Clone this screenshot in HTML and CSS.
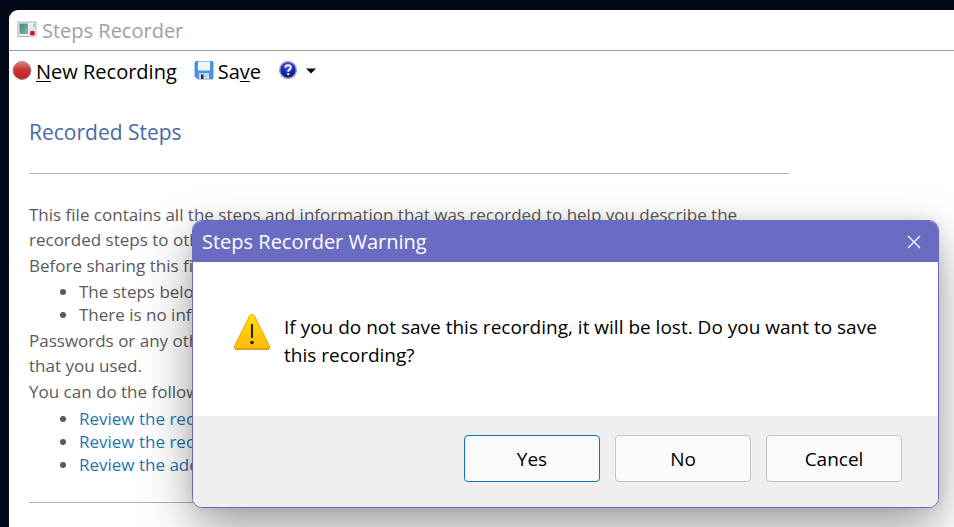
FILE: index.html
```html
<!DOCTYPE html>
<html lang="en">
<head>
<meta charset="utf-8">
<title>Steps Recorder</title>
<link rel="stylesheet" href="styles.css">
</head>
<body>
<main class="window">
  <header class="titlebar">
    <svg class="app-icon" width="21" height="18" viewBox="0 0 21 18" aria-hidden="true">
      <defs><linearGradient id="screen" x2="1" y2="1"><stop stop-color="#3f8587"/><stop offset="1" stop-color="#7fc09a"/></linearGradient></defs>
      <rect x="1" y="1" width="18" height="14.5" fill="#f4f7f8" stroke="#a3afb5"/>
      <rect x="2.500" y="2.500" width="8.500" height="10.500" fill="url(#screen)"/>
      <path d="M12.500 4.500h4M12.500 7.500h3" stroke="#d3dde0"/>
      <path d="M17 2.500v4" stroke="#5da59d"/>
      <circle cx="15.500" cy="12.200" r="4.300" fill="#ece9ea" stroke="#cfcccd" stroke-width=".6"/>
      <rect x="13.200" y="9.900" width="4.500" height="4.500" rx="1.200" fill="#cc1425"/>
    </svg>
    <span class="window-title">Steps Recorder</span>
  </header>
  <nav class="toolbar">
    <button class="tool" type="button">
      <svg width="20" height="20" viewBox="0 0 20 20" aria-hidden="true">
        <defs><linearGradient id="rec" x2="0" y2="1"><stop stop-color="#de8580"/><stop offset=".45" stop-color="#cc3430"/><stop offset="1" stop-color="#c2221f"/></linearGradient></defs>
        <circle cx="10" cy="9.500" r="9" fill="url(#rec)" stroke="#9b8f8d" stroke-width="1"/>
      </svg>
      <span><u>N</u>ew Recording</span>
    </button>
    <button class="tool" type="button">
      <svg width="20" height="20" viewBox="0 0 20 20" aria-hidden="true">
        <path d="M2.500 .5H18q1 0 1 1v15.500q0 1-1 1H4L1 15.500V2Q1 .5 2.500 .5z" fill="#4a95e6" stroke="#3a80d0" stroke-width=".8"/>
        <path d="M4 .5h12v9H4z" fill="#eef5fb"/>
        <path d="M5 12h10v6H5z" fill="#cbd6df"/>
        <path d="M7 13.500h2.500V18H7z" fill="#26323e"/>
      </svg>
      <span>Sa<u>v</u>e</span>
    </button>
    <button class="tool help" type="button" aria-label="Help">
      <svg width="20" height="20" viewBox="0 0 20 20" aria-hidden="true">
        <defs><radialGradient id="help" cx=".5" cy=".3" r=".7"><stop stop-color="#3c59dd"/><stop offset=".6" stop-color="#1724b5"/><stop offset="1" stop-color="#070c78"/></radialGradient></defs>
        <circle cx="10" cy="9" r="8.300" fill="url(#help)" stroke="#9b9da5" stroke-width="1.500"/>
        <path d="M7.300 6.700Q7.400 4.300 10.100 4.300 12.800 4.300 12.800 6.500 12.800 7.800 11.300 8.700 10.200 9.400 10.200 10.700" fill="none" stroke="#fff" stroke-width="2"/>
        <circle cx="10.200" cy="13.100" r="1.200" fill="#fff"/>
      </svg>
      <svg width="10" height="6" viewBox="0 0 10 6" aria-hidden="true"><path d="M0 .5h10L5 5.500z"/></svg>
    </button>
  </nav>
  <article class="report">
    <h1>Recorded Steps</h1>
    <hr>
    <p>This file contains all the steps and information that was recorded to help you describe the recorded steps to others.</p>
    <p>Before sharing this file, you should verify the following:</p>
    <ul>
      <li>The steps below accurately describe the recording.</li>
      <li>There is no information below that you do not want others to see.</li>
    </ul>
    <p>Passwords or any other text you typed were not recorded, except for function keys<br>that you used.</p>
    <p>You can do the following:</p>
    <ul class="links">
      <li><a href="#steps">Review the recorded steps</a></li>
      <li><a href="#screens">Review the recorded screenshots</a></li>
      <li><a href="#details">Review the additional details</a></li>
    </ul>
    <hr class="end">
  </article>
</main>
<section class="dialog" role="alertdialog" aria-labelledby="dialog-title" aria-describedby="dialog-text">
  <header class="dialog-bar">
    <h2 id="dialog-title">Steps Recorder Warning</h2>
    <button class="close" type="button" aria-label="Close">
      <svg width="14" height="14" viewBox="0 0 14 14" aria-hidden="true"><path d="M1 1l12 12M13 1L1 13" stroke="#fff" stroke-width="1.200"/></svg>
    </button>
  </header>
  <div class="dialog-body">
    <svg class="warning" width="38" height="38" viewBox="0 0 38 38" aria-hidden="true">
      <defs><linearGradient id="warn" x2="0" y2="1"><stop stop-color="#ffe000"/><stop offset="1" stop-color="#fdb90b"/></linearGradient></defs>
      <path d="M16.500 3Q19 -.5 21.500 3L36.500 33Q37.500 36.500 34.500 36.500H3.500Q.5 36.500 1.500 33z" fill="url(#warn)" stroke="#e2a51b" stroke-width="1"/>
      <path d="M2.500 36H35.500" stroke="#d99a1c" stroke-width="1.500"/>
      <path d="M19 11v14" stroke="#241d08" stroke-width="2"/>
      <circle cx="19" cy="29.500" r="1.800" fill="#241d08"/>
    </svg>
    <p id="dialog-text">If you do not save this recording, it will be lost. Do you want to save this recording?</p>
  </div>
  <footer class="dialog-actions">
    <button class="choice primary" type="button">Yes</button>
    <button class="choice" type="button">No</button>
    <button class="choice" type="button">Cancel</button>
  </footer>
</section>
</body>
</html>
```
FILE: styles.css
```css
* { box-sizing: border-box; }

body {
  margin: 0;
  padding: 10px 0 0 9px;
  min-height: 100vh;
  display: flex;
  overflow: hidden;
  background: #020817;
  font-family: "Open Sans", "Noto Sans", sans-serif;
  color: #000;
}

button { font: inherit; color: inherit; padding: 0; border: 0; background: none; }
svg { display: block; flex: none; }
h1, h2, p, ul { margin: 0; font-weight: 400; }

.window {
  flex: 1;
  background: #fff;
  border-top-left-radius: 9px;
}

.titlebar {
  display: flex;
  align-items: center;
  gap: 4px;
  height: 41px;
  padding-left: 8px;
  border-bottom: 1px solid #9a9da1;
}

.window-title { font-size: 20px; color: #a0a0a0; }

.toolbar {
  display: flex;
  align-items: center;
  gap: 17px;
  height: 40px;
  padding-left: 3px;
}

.tool { display: flex; align-items: center; gap: 4px; font-size: 20px; }
.tool u { text-decoration-thickness: 1px; text-underline-offset: 2px; }
.help { gap: 8px; }

.report {
  max-width: 780px;
  padding: 24px 0 0 20px;
  font-size: 17px;
  line-height: 25px;
  color: #5a5a5a;
}

.report h1 { font-size: 21px; line-height: 34px; color: #4a6aa5; }
.report hr { margin: 24px 0 28px; border: 0; border-top: 1px solid #adb1b5; }
.report hr.end { margin: 26px 0 0; }
.report p { margin-bottom: 1px; }
.report ul { margin: 2px 0; padding-left: 50px; line-height: 23px; }
.report ul.links { margin-top: 3px; }
.report a { color: #1f76ad; text-decoration: none; }

.dialog {
  position: absolute;
  top: 220px;
  left: 192px;
  right: 15px;
  overflow: hidden;
  border: 1px solid #6a6bc2;
  border-radius: 10px;
  background: #fff;
  box-shadow: 0 20px 50px rgba(0, 0, 0, .38), 0 0 12px rgba(0, 0, 0, .08);
}

.dialog-bar {
  display: flex;
  align-items: center;
  justify-content: space-between;
  height: 41px;
  padding: 0 17px 0 9px;
  background: #6a6bc2;
  color: #fff;
}

.dialog-bar h2 { font-size: 20px; }

.dialog-body {
  display: flex;
  align-items: center;
  gap: 13px;
  padding: 51px 40px 47px;
}

.dialog-body p { font-size: 19px; line-height: 28px; }
.warning { align-self: flex-start; }

.dialog-actions {
  display: flex;
  justify-content: flex-end;
  gap: 15px;
  padding: 19px 36px 25px;
  background: #efefef;
}

.choice {
  width: 136px;
  height: 47px;
  padding-top: 1px;
  border: 1px solid #c4c4c4;
  border-radius: 4px;
  background: #fafafa;
  font-size: 19px;
}

.primary { border-color: #1276b8; }
```
